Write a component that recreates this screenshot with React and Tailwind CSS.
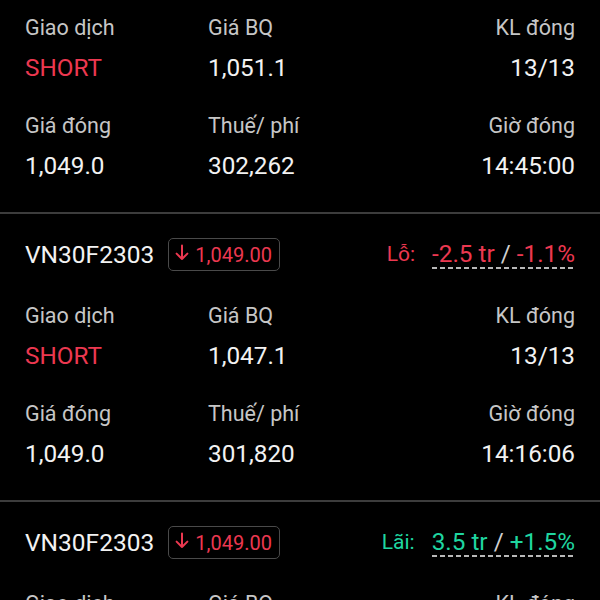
import React from "react";

const RED = "text-[#ec3850]";
const GREEN = "text-[#1fd6a0]";

function Badge() {
  return (
    <div className="flex h-[33px] w-[112px] items-center rounded-[5px] border-[1.5px] border-[#4a4a4a] pl-[6px] pt-[2px]">
      <svg width="14" height="17" viewBox="0 0 14 17" className="mb-[5px] mr-[6px]">
        <path d="M7 1.5V15M1.6 9.6L7 15L12.4 9.6" stroke="#ec3850" strokeWidth="2" fill="none" strokeLinecap="round" strokeLinejoin="round" />
      </svg>
      <span className={`text-[20px] leading-none ${RED}`}>1,049.00</span>
    </div>
  );
}

function Cell({ label, value, valueClass = "text-[#f2f2f2]", right }) {
  return (
    <div className={right ? "text-right" : ""}>
      <div className="text-[21.5px] leading-[28px] text-[#c6c6c6]">{label}</div>
      <div className={`mt-[11px] text-[24.3px] leading-[30px] ${valueClass}`}>{value}</div>
    </div>
  );
}

function Card({ data, first }) {
  const profit = data.pnl > 0;
  const c = profit ? GREEN : RED;
  return (
    <div className={first ? "-mt-[74px]" : ""}>
      <div className="px-[25px] pt-[22px] pb-[31px]">
        <div className="flex h-[34px] items-center">
          <div className="pt-[4px] text-[24.5px] leading-none text-[#f2f2f2]">VN30F2303</div>
          <div className="ml-[14px] mt-[2px]">
            <Badge />
          </div>
          <div className="ml-auto mt-[5px] flex items-start self-start">
            <span className={`mr-[17px] text-[21px] leading-[26px] ${c}`}>{profit ? "Lãi:" : "Lỗ:"}</span>
            <div className="flex flex-col">
              <span className={`text-[24.3px] leading-[26px] ${c}`}>
                {data.amount} <span className="text-[#cfcfcf]">/</span> {data.pct}
              </span>
              <div className="h-[2px] w-full bg-[repeating-linear-gradient(90deg,#b8b8b8_0px,#b8b8b8_5px,transparent_5px,transparent_8px)]" />
            </div>
          </div>
        </div>
        <div className="mt-[32px] grid grid-cols-[183px_1fr_1fr]">
          <Cell label="Giao dịch" value="SHORT" valueClass={RED} />
          <Cell label="Giá BQ" value={data.avg} />
          <Cell label="KL đóng" value="13/13" right />
        </div>
        <div className="mt-[29px] grid grid-cols-[183px_1fr_1fr]">
          <Cell label="Giá đóng" value="1,049.0" />
          <Cell label="Thuế/ phí" value={data.fee} />
          <Cell label="Giờ đóng" value={data.time} right />
        </div>
      </div>
      <div className="h-[2px] bg-[#3c3c3c]" />
    </div>
  );
}

const cards = [
  { pnl: -1, amount: "-2.4 tr", pct: "-1.0%", avg: "1,051.1", fee: "302,262", time: "14:45:00" },
  { pnl: -1, amount: "-2.5 tr", pct: "-1.1%", avg: "1,047.1", fee: "301,820", time: "14:16:06" },
  { pnl: 1, amount: "3.5 tr", pct: "+1.5%", avg: "1,052.6", fee: "302,400", time: "14:10:00" },
];

export default function App() {
  return (
    <div className="h-[600px] w-[600px] overflow-hidden bg-black" style={{ fontFamily: "Roboto, 'Noto Sans', sans-serif" }}>
      {cards.map((d, i) => (
        <Card key={i} data={d} first={i === 0} />
      ))}
    </div>
  );
}
